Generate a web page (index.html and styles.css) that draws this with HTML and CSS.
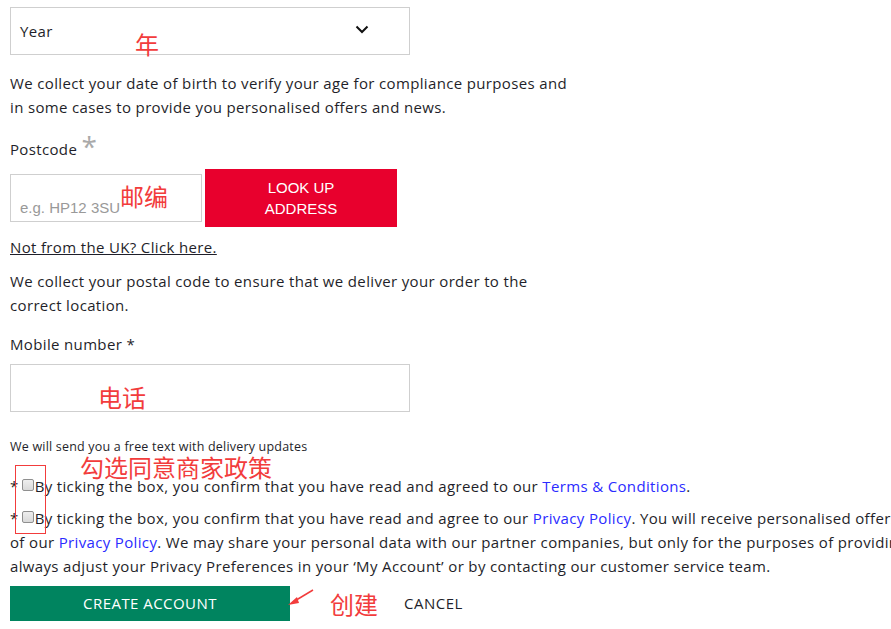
FILE: index.html
```html
<!DOCTYPE html>
<html lang="en">
<head>
    <meta charset="UTF-8">
    <meta name="viewport" content="width=device-width, initial-scale=1.0">
    <title>Create account</title>
    <link rel="stylesheet" href="styles.css">
</head>
<body>
    <div class="page">
        <form class="signup-form">
            <!-- 出生年份 -->
            <div class="select-box">
                <span class="select-text">Year</span>
                <svg class="chevron" width="14" height="9" viewBox="0 0 14 9">
                    <path d="M1.5 1.5 L7 7 L12.5 1.5" fill="none" stroke="#111" stroke-width="2"/>
                </svg>
            </div>
            <p class="info-text">We collect your date of birth to verify your age for compliance purposes and<br>in some cases to provide you personalised offers and news.</p>

            <!-- 邮编 -->
            <label class="field-label postcode-label">Postcode <span class="big-star">*</span></label>
            <div class="postcode-row">
                <div class="text-input postcode-input"><span class="placeholder">e.g. HP12 3SU</span></div>
                <button type="button" class="lookup-btn">LOOK UP<br>ADDRESS</button>
            </div>
            <a class="uk-link" href="#">Not from the UK? Click here.</a>
            <p class="info-text">We collect your postal code to ensure that we deliver your order to the<br>correct location.</p>

            <!-- 电话 -->
            <label class="field-label">Mobile number *</label>
            <div class="text-input mobile-input"></div>
            <p class="small-text">We will send you a free text with delivery updates</p>

            <!-- 同意条款 -->
            <div class="consent first">
                *<span class="check-box"></span>By ticking the box, you confirm that you have read and agreed to our <a href="#">Terms &amp; Conditions</a>.
            </div>
            <div class="consent">
                *<span class="check-box"></span>By ticking the box, you confirm that you have read and agree to our <a href="#">Privacy Policy</a>. You will receive personalised offers and news from us by email and post in line with the terms<br>of our <a href="#">Privacy Policy</a>. We may share your personal data with our partner companies, but only for the purposes of providing you with our services. You can<br>always adjust your Privacy Preferences in your ‘My Account’ or by contacting our customer service team.
            </div>

            <div class="actions">
                <button type="button" class="create-btn">CREATE ACCOUNT</button>
                <button type="button" class="cancel-btn">CANCEL</button>
            </div>
        </form>

        <!-- 标注 -->
        <span class="note note-year">年</span>
        <span class="note note-post">邮编</span>
        <span class="note note-phone">电话</span>
        <span class="note note-agree">勾选同意商家政策</span>
        <span class="note note-create">创建</span>
        <div class="note-frame"></div>
        <svg class="note-arrow" width="30" height="20" viewBox="0 0 30 20">
            <path d="M26 2 L6 14" stroke="#f23c3c" stroke-width="1.5" fill="none"/>
            <path d="M1 17 L10 9 L12 15 Z" fill="#f23c3c"/>
        </svg>
    </div>
</body>
</html>
```

FILE: styles.css
```css
* {
    margin: 0;
    padding: 0;
    box-sizing: border-box;
}
html, body {
    overflow: hidden;
}
body {
    font-family: 'Open Sans', 'Noto Sans', sans-serif;
    font-size: 15px;
    letter-spacing: 0.35px;
    color: #1f1f2a;
    background: #fff;
}
.page {
    position: relative;
    width: 1100px;
    padding: 6px 10px 0;
}
.signup-form {
    display: flex;
    flex-direction: column;
    align-items: flex-start;
}
.select-box {
    width: 400px;
    height: 48px;
    border: 1px solid #cfcfcf;
    margin-top: 1px;
    display: flex;
    align-items: center;
    justify-content: space-between;
    padding: 0 40px 0 9px;
}
.chevron {
    margin-top: -4px;
}
.info-text {
    line-height: 24px;
    margin-top: 16px;
}
.field-label {
    line-height: 24px;
}
.postcode-label {
    margin-top: 18px;
}
.big-star {
    color: #aaa;
    font-size: 28px;
    vertical-align: top;
    line-height: 20px;
    position: relative;
    top: -1px;
}
.postcode-row {
    display: flex;
    align-items: center;
    gap: 3px;
    margin-top: 8px;
}
.text-input {
    border: 1px solid #cfcfcf;
    height: 48px;
    background: #fff;
}
.postcode-input {
    width: 192px;
    display: flex;
    align-items: flex-end;
    padding: 0 9px 5px;
}
.placeholder {
    color: #999;
    font-family: 'Liberation Sans', Arial, sans-serif;
    font-size: 15px;
    letter-spacing: 0;
}
.lookup-btn {
    width: 192px;
    height: 58px;
    background: #e8002d;
    color: #fff;
    border: none;
    font-family: 'Liberation Sans', Arial, sans-serif;
    font-size: 15px;
    line-height: 21px;
}
.uk-link {
    color: #1f1f2a;
    text-decoration: underline;
    line-height: 24px;
    margin-top: 8px;
}
.uk-link + .info-text {
    margin-top: 10px;
}
.info-text + .field-label {
    margin-top: 15px;
}
.info-text + .postcode-label {
    margin-top: 18px;
}
.mobile-input {
    width: 400px;
    margin-top: 8px;
}
.small-text {
    font-size: 12.5px;
    letter-spacing: 0.2px;
    line-height: 18px;
    margin-top: 26px;
}
.consent {
    line-height: 24px;
    white-space: nowrap;
}
.consent.first {
    margin-top: 18px;
}
.consent + .consent {
    margin-top: 8px;
}
.consent a {
    color: #2b2bff;
    text-decoration: none;
}
.check-box {
    display: inline-block;
    width: 12px;
    height: 12px;
    border: 1px solid #8f8f8f;
    border-radius: 2px;
    background: linear-gradient(#eee, #d9d9d9);
    margin: 0 1px 0 3px;
    vertical-align: 1px;
}
.actions {
    display: flex;
    align-items: center;
    margin-top: 8px;
}
.create-btn {
    width: 280px;
    height: 35px;
    padding-bottom: 2px;
    background: #00845f;
    color: #fff;
    border: none;
    font-family: inherit;
    font-size: 15px;
    letter-spacing: 0.45px;
}
.cancel-btn {
    background: none;
    border: none;
    font-family: inherit;
    font-size: 15px;
    letter-spacing: 0.5px;
    color: #1f1f2a;
    margin-left: 114px;
    margin-top: -2px;
}
.note {
    position: absolute;
    color: #f23c3c;
    font-family: 'Noto Sans CJK SC', sans-serif;
    font-size: 24px;
    letter-spacing: 0;
    line-height: 1;
}
.note-year {
    left: 135px;
    top: 32px;
}
.note-post {
    left: 120px;
    top: 184px;
}
.note-phone {
    left: 98px;
    top: 385px;
}
.note-agree {
    left: 80px;
    top: 455px;
}
.note-create {
    left: 330px;
    top: 592px;
}
.note-frame {
    position: absolute;
    left: 15px;
    top: 465px;
    width: 31px;
    height: 69px;
    border: 1px solid #f23c3c;
}
.note-arrow {
    position: absolute;
    left: 287px;
    top: 588px;
}
```
